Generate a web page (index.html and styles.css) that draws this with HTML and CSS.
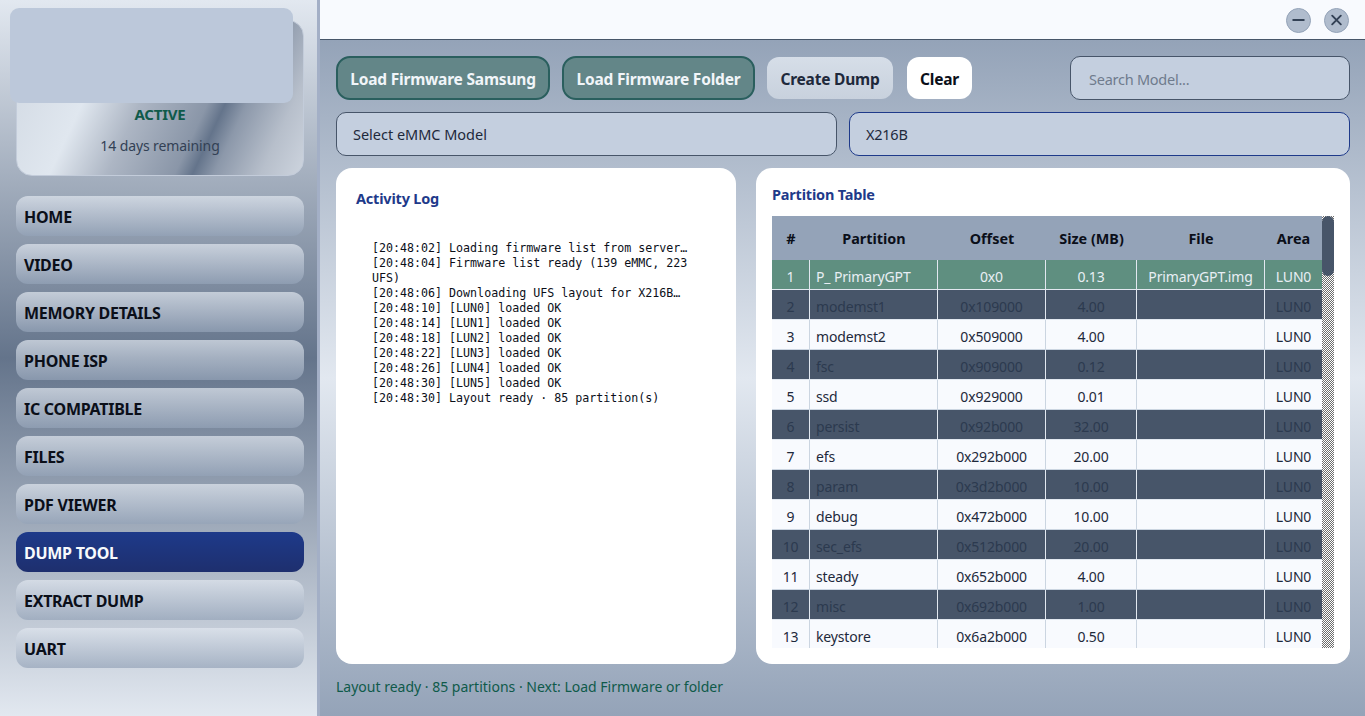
FILE: index.html
```html
<!DOCTYPE html>
<html lang="en">
<head>
<meta charset="utf-8">
<title>Dump Tool</title>
<link rel="stylesheet" href="styles.css">
</head>
<body>
<div class="app">
  <aside class="sidebar">
    <div class="logo-box"></div>
    <div class="license">
      <div class="license-state">ACTIVE</div>
      <div class="license-days">14 days remaining</div>
    </div>
    <nav class="nav">
      <div class="nav-item">HOME</div>
      <div class="nav-item">VIDEO</div>
      <div class="nav-item">MEMORY DETAILS</div>
      <div class="nav-item">PHONE ISP</div>
      <div class="nav-item">IC COMPATIBLE</div>
      <div class="nav-item">FILES</div>
      <div class="nav-item">PDF VIEWER</div>
      <div class="nav-item nav-active">DUMP TOOL</div>
      <div class="nav-item">EXTRACT DUMP</div>
      <div class="nav-item">UART</div>
    </nav>
  </aside>
  <div class="main">
    <header class="titlebar">
      <div class="win-btn"><svg viewBox="0 0 24 24" width="24" height="24"><path d="M6.5 12h11" stroke="#334155" stroke-width="2" stroke-linecap="round" fill="none"/></svg></div>
      <div class="win-btn"><svg viewBox="0 0 24 24" width="24" height="24"><path d="M7.5 7.5l9 9M16.500 7.500l-9 9" stroke="#334155" stroke-width="2" stroke-linecap="round" fill="none"/></svg></div>
    </header>
    <div class="content">
      <div class="toolbar">
        <div class="btn btn-teal btn-samsung">Load Firmware Samsung</div>
        <div class="btn btn-teal btn-folder">Load Firmware Folder</div>
        <div class="btn btn-light">Create Dump</div>
        <div class="btn btn-white">Clear</div>
        <div class="field field-search">Search Model...</div>
      </div>
      <div class="selects">
        <div class="field field-select">Select eMMC Model</div>
        <div class="field field-focus">X216B</div>
      </div>
      <div class="panels">
        <section class="panel panel-log">
          <h2 class="panel-title log-title">Activity Log</h2>
          <pre class="log">[20:48:02] Loading firmware list from server…
[20:48:04] Firmware list ready (139 eMMC, 223
UFS)
[20:48:06] Downloading UFS layout for X216B…
[20:48:10] [LUN0] loaded OK
[20:48:14] [LUN1] loaded OK
[20:48:18] [LUN2] loaded OK
[20:48:22] [LUN3] loaded OK
[20:48:26] [LUN4] loaded OK
[20:48:30] [LUN5] loaded OK
[20:48:30] Layout ready · 85 partition(s)</pre>
        </section>
        <section class="panel panel-table">
          <h2 class="panel-title">Partition Table</h2>
          <div class="table-wrap">
            <div class="table-clip">
              <table class="ptable">
                <colgroup><col class="c1"><col class="c2"><col class="c3"><col class="c4"><col class="c5"><col class="c6"></colgroup>
                <thead><tr><th>#</th><th>Partition</th><th>Offset</th><th>Size (MB)</th><th>File</th><th>Area</th></tr></thead>
                <tbody>
                  <tr class="sel"><td>1</td><td class="name">P_ PrimaryGPT</td><td>0x0</td><td>0.13</td><td>PrimaryGPT.img</td><td>LUN0</td></tr>
                  <tr class="alt"><td>2</td><td class="name">modemst1</td><td>0x109000</td><td>4.00</td><td></td><td>LUN0</td></tr>
                  <tr><td>3</td><td class="name">modemst2</td><td>0x509000</td><td>4.00</td><td></td><td>LUN0</td></tr>
                  <tr class="alt"><td>4</td><td class="name">fsc</td><td>0x909000</td><td>0.12</td><td></td><td>LUN0</td></tr>
                  <tr><td>5</td><td class="name">ssd</td><td>0x929000</td><td>0.01</td><td></td><td>LUN0</td></tr>
                  <tr class="alt"><td>6</td><td class="name">persist</td><td>0x92b000</td><td>32.00</td><td></td><td>LUN0</td></tr>
                  <tr><td>7</td><td class="name">efs</td><td>0x292b000</td><td>20.00</td><td></td><td>LUN0</td></tr>
                  <tr class="alt"><td>8</td><td class="name">param</td><td>0x3d2b000</td><td>10.00</td><td></td><td>LUN0</td></tr>
                  <tr><td>9</td><td class="name">debug</td><td>0x472b000</td><td>10.00</td><td></td><td>LUN0</td></tr>
                  <tr class="alt"><td>10</td><td class="name">sec_efs</td><td>0x512b000</td><td>20.00</td><td></td><td>LUN0</td></tr>
                  <tr><td>11</td><td class="name">steady</td><td>0x652b000</td><td>4.00</td><td></td><td>LUN0</td></tr>
                  <tr class="alt"><td>12</td><td class="name">misc</td><td>0x692b000</td><td>1.00</td><td></td><td>LUN0</td></tr>
                  <tr><td>13</td><td class="name">keystore</td><td>0x6a2b000</td><td>0.50</td><td></td><td>LUN0</td></tr>
                </tbody>
              </table>
            </div>
            <div class="scroll-track"><div class="scroll-thumb"></div></div>
          </div>
        </section>
      </div>
      <div class="status">Layout ready · 85 partitions · Next: Load Firmware or folder</div>
    </div>
  </div>
</div>
</body>
</html>
```
FILE: styles.css
```css
* { box-sizing: border-box; }
html, body { margin: 0; height: 100%; }
body {
  font-family: "Noto Sans", "Open Sans", "Liberation Sans", sans-serif;
  overflow: hidden;
}
.app { display: flex; width: 1365px; height: 716px; }

.sidebar {
  position: relative;
  width: 320px;
  flex: none;
  padding: 20px 13px 0 16px;
  border-right: 3px solid #a3afc6;
  background: linear-gradient(180deg, #e2e8f0 0%, #64748b 50%, #e2e8f0 100%);
}
.logo-box {
  position: absolute;
  left: 10px;
  top: 8px;
  width: 283px;
  height: 95px;
  border-radius: 9px;
  background: #bcc8da;
}
.license {
  height: 156px;
  padding-top: 83px;
  border: 1px solid #c3ccda;
  border-radius: 16px;
  text-align: center;
  background: linear-gradient(115deg, #cfd7e1 0%, #e0e7ef 29%, #adb6c4 45%, #8a96a8 64%, #64748b 69%, #8c98aa 75%, #b7bfcb 88%, #cdd4de 100%);
}
.license-state { font-size: 15px; line-height: 20px; font-weight: 700; color: #0f5a4a; letter-spacing: -.2px; }
.license-days { margin-top: 12px; font-size: 14px; line-height: 20px; color: #334155; letter-spacing: -.1px; }

.nav { display: flex; flex-direction: column; gap: 8px; margin-top: 20px; }
.nav-item {
  height: 40px;
  padding-left: 8px;
  border-radius: 12px;
  font-size: 16px;
  line-height: 43px;
  font-weight: 700;
  color: #0b0f19;
  letter-spacing: -.27px;
  background: linear-gradient(180deg, rgba(226,232,240,.7) 0%, rgba(148,163,184,.7) 100%);
}
.nav-active {
  color: #f8fafc;
  background: linear-gradient(180deg, #1e3a8a 0%, #1e2f6e 100%);
}

.main { flex: 1; display: flex; flex-direction: column; min-width: 0; }
.titlebar {
  height: 40px;
  flex: none;
  display: flex;
  justify-content: flex-end;
  align-items: center;
  gap: 13px;
  padding: 1px 16px 0 0;
  background: #f8fafe;
  border-bottom: 1px solid #475569;
}
.win-btn {
  width: 25px;
  height: 25px;
  border-radius: 50%;
  border: 1px solid #94a3b8;
  background: #b0bccd;
  display: flex;
  align-items: center;
  justify-content: center;
}
.content {
  flex: 1;
  display: flex;
  flex-direction: column;
  padding: 16px 15px 0 16px;
  background: linear-gradient(180deg, #94a3b8 0%, #e2e8f0 50%, #94a3b8 100%);
}
.toolbar { display: flex; align-items: center; height: 44px; }
.btn {
  display: flex;
  align-items: center;
  justify-content: center;
  padding-top: 2px;
  font-size: 15.500px;
  font-weight: 700;
  border-radius: 12px;
  letter-spacing: -.2px;
}
.btn-teal {
  height: 44px;
  color: #f1f5f9;
  background: #638688;
  border: 2px solid #2a5f5e;
  border-radius: 14px;
}
.btn-samsung { width: 214px; }
.btn-folder { width: 193px; margin-left: 12px; }
.btn-light {
  width: 126px;
  height: 42px;
  margin-left: 12px;
  color: #1e293b;
  background: linear-gradient(180deg, #d6dee8, #c8d1dd);
}
.btn-white {
  width: 65px;
  height: 42px;
  margin-left: 14px;
  color: #0b0f19;
  background: #fff;
}
.field {
  flex: 1;
  display: flex;
  align-items: center;
  height: 44px;
  padding-left: 16px;
  border: 1px solid #475569;
  border-radius: 10px;
  background: #c4cfdf;
  font-size: 14.500px;
  letter-spacing: -.25px;
  color: #1e293b;
}
.field-search {
  flex: none;
  width: 280px;
  margin-left: auto;
  padding: 2px 0 0 18px;
  color: #6f7b8d;
}
.field-select { letter-spacing: -.02px; }
.field-focus { border-color: #1e3a8a; }
.selects { display: flex; gap: 12px; margin-top: 12px; }
.panels { display: flex; gap: 20px; margin-top: 12px; height: 496px; }
.panel { background: #fff; border-radius: 16px; }
.panel-log { width: 400px; padding: 20px; }
.panel-table { flex: 1; padding: 16px; }
.panel-title {
  margin: 0;
  padding-bottom: 2px;
  font-size: 14.500px;
  line-height: 20px;
  font-weight: 700;
  color: #1e3a8a;
  letter-spacing: -.2px;
}
.log {
  margin: 31px 0 0;
  padding-left: 16px;
  font-family: "DejaVu Sans Mono", "Liberation Mono", monospace;
  font-size: 11.650px;
  line-height: 15px;
  color: #0b0f19;
  white-space: pre;
}
.table-wrap { display: flex; height: 432px; margin-top: 10px; width: 562px; }
.table-clip { width: 550px; height: 432px; overflow: hidden; }
.ptable {
  width: 550px;
  table-layout: fixed;
  border-collapse: separate;
  border-spacing: 0;
  font-size: 14px;
  letter-spacing: -.15px;
}
.c1 { width: 38px; } .c2 { width: 128px; } .c3 { width: 108px; }
.c4 { width: 91px; } .c5 { width: 128px; } .c6 { width: 57px; }
.ptable th {
  height: 44px;
  padding: 0;
  background: #94a3b8;
  color: #0b0f19;
  font-size: 14.400px;
  letter-spacing: 0;
  font-weight: 700;
  text-align: center;
}
.ptable td {
  height: 30px;
  padding: 3px 0 0;
  text-align: center;
  background: #f8fafe;
  color: #1e293b;
  border-right: 1px solid #cbd5e1;
  border-bottom: 1px solid #cbd5e1;
  white-space: nowrap;
}
.ptable td:last-child { border-right: 0; }
.ptable td.name { text-align: left; padding-left: 6px; }
.ptable tr.alt td { background: #475569; color: #2c3a4f; border-color: #e2e8f0; }
.ptable tr.sel td { background: #5f8f80; color: #e8eef4; border-color: #e2e8f0; }
.scroll-track {
  width: 12px;
  height: 432px;
  background: repeating-conic-gradient(#6e6e6e 0 25%, #fff 0 50%) 0 0 / 2px 2px;
}
.scroll-thumb { height: 60px; border-radius: 6px; background: #475569; }
.status {
  margin-top: 14px;
  font-size: 14px;
  line-height: 18px;
  color: #0f5a4a;
}
```
